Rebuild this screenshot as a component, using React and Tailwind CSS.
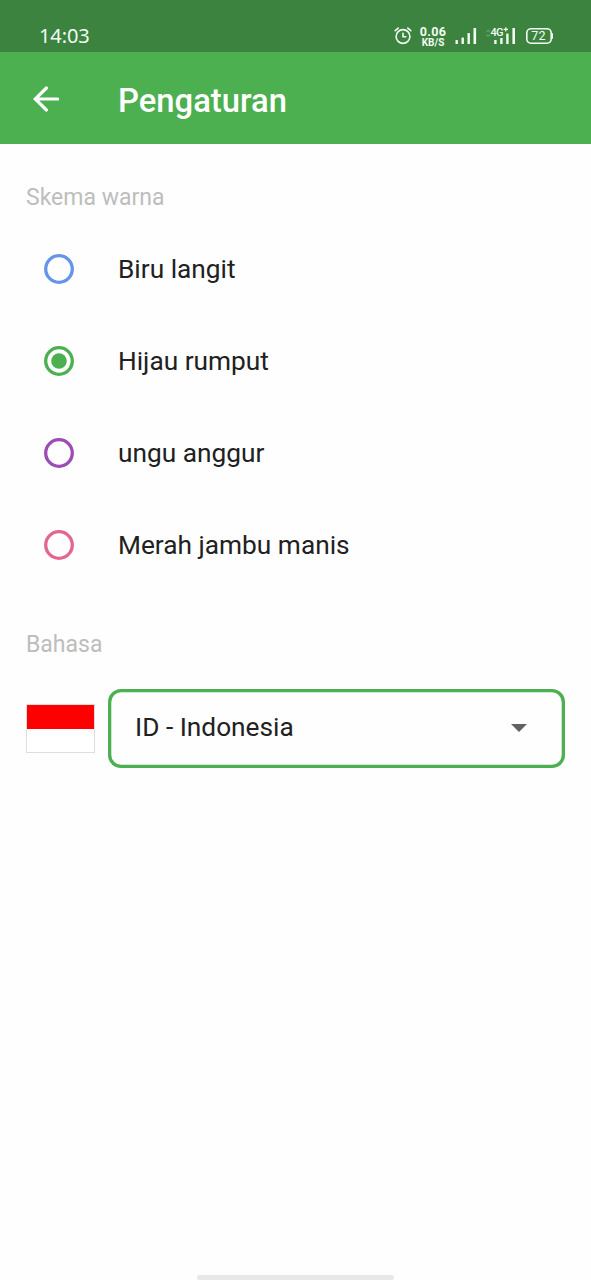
import React, { useState } from "react";

const SCHEMES = [
  { id: "blue", label: "Biru langit", color: "text-[#6495E8]" },
  { id: "green", label: "Hijau rumput", color: "text-[#4CAF50]" },
  { id: "purple", label: "ungu anggur", color: "text-[#9C4DB5]" },
  { id: "pink", label: "Merah jambu manis", color: "text-[#E4668F]" },
];

function AlarmIcon() {
  return (
    <svg className="h-[19px] w-[18px]" viewBox="0 0 18 19" fill="none" stroke="#f3fbf3" strokeWidth="1.6" strokeLinecap="round">
      <circle cx="9" cy="10.5" r="6.9" />
      <path d="M9 7.3V10.8H11.8M1.2 4.7L4.2 2.1M16.8 4.7L13.8 2.1" />
    </svg>
  );
}

function Signal() {
  return (
    <svg className="h-4 w-[22px]" viewBox="0 0 22 16" fill="#f3fbf3">
      <rect x="0.5" y="12" width="2.4" height="4" rx=".6" />
      <rect x="6.5" y="9.5" width="2.4" height="6.5" rx=".6" />
      <rect x="12.5" y="5" width="2.4" height="11" rx=".6" />
      <rect x="18.5" y="0" width="2.6" height="16" rx=".6" />
    </svg>
  );
}

function MobileSignal() {
  return (
    <svg className="h-[19px] w-[31px]" viewBox="0 0 31 19">
      <path d="M.5 5.8L2.2 4.2L3.9 5.8M.5 8.7L2.2 10.3L3.9 8.7" fill="none" stroke="#64a067" strokeWidth="1.2" />
      <text x="4.5" y="10" fill="#f3fbf3" fontFamily="Roboto, sans-serif" fontSize="11" fontWeight="500" textLength="13">4G</text>
      <path d="M19.8 1.2V5.6M17.6 3.4H22" stroke="#f3fbf3" strokeWidth="1.2" />
      <g fill="#f3fbf3">
        <rect x="8.2" y="14" width="2.4" height="4" rx=".5" />
        <rect x="14.2" y="12" width="2.4" height="6" rx=".5" />
        <rect x="20.2" y="7.5" width="2.4" height="10.5" rx=".5" />
        <rect x="26.4" y="2" width="2.6" height="16" rx=".5" />
      </g>
    </svg>
  );
}

function Radio({ checked }) {
  return (
    <svg className="h-[30px] w-[30px]" viewBox="0 0 30 30" fill="none">
      <circle cx="15" cy="15" r="13.3" stroke="currentColor" strokeWidth="3.3" />
      {checked && <circle cx="15" cy="15" r="7.8" fill="currentColor" />}
    </svg>
  );
}

function StatusBar() {
  return (
    <div className="flex h-[52px] items-start bg-[#3B833E] pl-[39px] text-[#f3fbf3]">
      <span className="mt-[24px] w-[355px] text-[20px] leading-6 tracking-[-0.1px]" style={{ fontFamily: '"Noto Sans", sans-serif' }}>
        14:03
      </span>
      <div className="mt-[26px]"><AlarmIcon /></div>
      <div className="ml-[7px] mt-[26px] flex w-[28px] flex-col items-center font-bold">
        <span className="text-[12.5px] leading-[11px] tracking-[0.4px]">0.06</span>
        <span className="text-[10px] leading-[11px]">KB/S</span>
      </div>
      <div className="ml-[8px] mt-[28px]"><Signal /></div>
      <div className="ml-[9px] mt-[26px]"><MobileSignal /></div>
      <div className="ml-[8.5px] mt-[28px] flex items-center">
        <div className="flex h-4 w-[26px] items-center justify-center rounded-[5px] text-[12.5px] leading-none tracking-[0.3px] shadow-[inset_0_0_0_1.6px_#f3fbf3]">72</div>
        <div className="h-[6px] w-[1.5px] rounded-r bg-[#f3fbf3]" />
      </div>
    </div>
  );
}

export default function App() {
  const [scheme, setScheme] = useState("green");
  return (
    <div className="flex h-[1280px] w-[591px] flex-col bg-[#fefefe] font-['Roboto',sans-serif] text-[#212121]">
      <StatusBar />
      <header className="flex h-[92px] items-center bg-[#4CAF50] pl-[33px] text-white">
        <button aria-label="Kembali" className="mt-px">
          <svg className="h-[26px] w-[26px]" viewBox="0 0 26 26" fill="none" stroke="white" strokeWidth="3.2" strokeLinecap="round">
            <path d="M24.6 13H3M13.4 2L2.2 13L13.4 24" />
          </svg>
        </button>
        <h1 className="ml-[59px] mt-[5px] text-[32.8px] font-medium leading-10">Pengaturan</h1>
      </header>
      <main className="flex-1 px-[26px]">
        <h2 className="mt-[40px] text-[23px] leading-7 text-[#BDBDBD]">Skema warna</h2>
        <div className="mt-[11px]">
          {SCHEMES.map((s) => (
            <button key={s.id} onClick={() => setScheme(s.id)} className="flex h-[92px] w-full items-center pl-[18px] text-left">
              <span className={s.color}>
                <Radio checked={scheme === s.id} />
              </span>
              <span className="ml-[44px] text-[26.27px] leading-8">{s.label}</span>
            </button>
          ))}
        </div>
        <h2 className="mt-[40px] text-[23px] leading-7 text-[#BDBDBD]">Bahasa</h2>
        <div className="mt-[30px] flex items-center">
          <div className="flex h-[49px] w-[69px] flex-col border-[1.5px] border-[#dedede]">
            <div className="flex-1 bg-[#ff0000]" />
            <div className="flex-1 bg-white" />
          </div>
          <button className="ml-[13px] flex h-[79px] w-[457px] shrink-0 items-center justify-between rounded-[13px] pl-[27px] pr-[38.5px] shadow-[inset_0_0_0_3.3px_#4CAF50]">
            <span className="-mt-[3px] text-[26.27px] leading-8">ID - Indonesia</span>
            <svg className="-mt-[2px] h-2 w-4" viewBox="0 0 16 8" fill="#616161">
              <path d="M0 0H16L8 8Z" />
            </svg>
          </button>
        </div>
      </main>
      <div className="flex h-[5px] justify-center">
        <div className="h-[5px] w-[197px] rounded-full bg-[#e8e8e8]" />
      </div>
    </div>
  );
}
